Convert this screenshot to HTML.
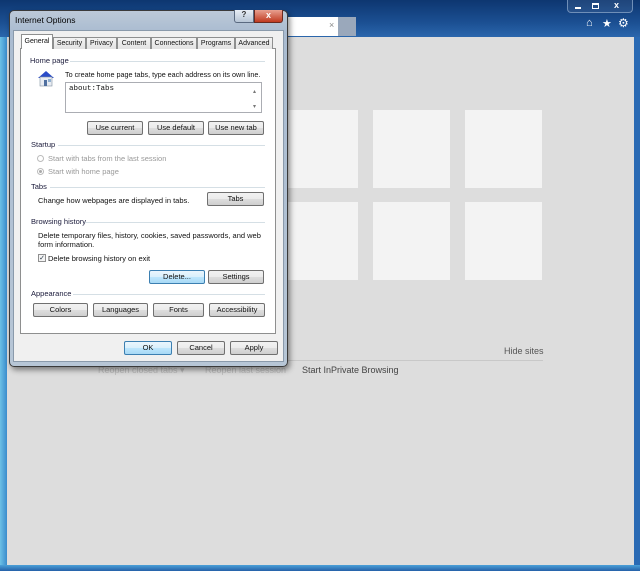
<!DOCTYPE html>
<html><head><meta charset="utf-8"><style>
*{margin:0;padding:0;box-sizing:border-box}
body{width:640px;height:571px;overflow:hidden;position:relative;font-family:"Liberation Sans",sans-serif;font-size:7.5px;color:#111;background:#2a5a9a}
.a{position:absolute}
.frame{left:0;top:0;width:640px;height:571px;background:linear-gradient(90deg,#6cc0e6 0,#3a8ccc 7px,#1e4f96 50%,#2a6ab4 100%)}
.top{left:0;top:0;width:640px;height:37px;background:linear-gradient(180deg,#0d3670 0,#1b4f92 60%,#2a66ac 100%)}
.content{left:7px;top:37px;width:627px;height:528px;background:#dddddd}
.btm{left:0;top:565px;width:640px;height:6px;background:linear-gradient(180deg,#4aa0d8,#2560a8)}
.tile{background:#f3f3f3;width:77px;height:78px}
.btn{position:absolute;height:14px;border:1px solid #707070;border-radius:2px;background:linear-gradient(#f2f2f2 0,#ebebeb 50%,#dddddd 51%,#cfcfcf 100%);text-align:center;line-height:12px;font-size:7.5px;color:#111}
.grp{position:absolute;font-size:7.5px;color:#1a1a3a}
.line{position:absolute;height:1px;background:#d5dfe5}
.tab{position:absolute;top:37px;height:12px;border:1px solid #8e8f8f;border-bottom:none;background:linear-gradient(#f3f3f3,#e3e3e3);font-size:7px;line-height:11px;text-align:center;white-space:nowrap;overflow:hidden}
</style></head><body>
<div class="a frame"></div>
<div class="a top"></div>
<div class="a content"></div>
<div class="a btm"></div>
<div class="a" style="left:567px;top:0;width:66px;height:13px;border:1px solid #6f8fb8;border-top:none;border-radius:0 0 4px 4px;background:rgba(255,255,255,.08)"></div>
<div class="a" style="left:575px;top:7px;width:6px;height:2px;background:#fff"></div>
<div class="a" style="left:592px;top:3px;width:7px;height:6px;border:1px solid #fff;border-top-width:2px"></div>
<div class="a" style="left:614px;top:0px;color:#fff;font-size:9px;font-weight:bold">x</div>
<div class="a" style="left:586px;top:17px;color:#fff;font-size:11px">&#8962;</div>
<div class="a" style="left:602px;top:17px;color:#fff;font-size:11px">&#9733;</div>
<div class="a" style="left:618px;top:16px;color:#fff;font-size:12px">&#9881;</div>
<div class="a" style="left:280px;top:17px;width:58px;height:19px;background:#fff"></div>
<div class="a" style="left:329px;top:20px;color:#888;font-size:9px">×</div>
<div class="a" style="left:338px;top:17px;width:18px;height:19px;background:#9aa8bb"></div>
<div class="a tile" style="left:281px;top:110px"></div>
<div class="a tile" style="left:373px;top:110px"></div>
<div class="a tile" style="left:465px;top:110px"></div>
<div class="a tile" style="left:281px;top:202px"></div>
<div class="a tile" style="left:373px;top:202px"></div>
<div class="a tile" style="left:465px;top:202px"></div>
<div class="a" style="left:504px;top:346px;font-size:9px;color:#555">Hide sites</div>
<div class="a" style="left:98px;top:360px;width:445px;height:1px;background:#c8c8c8"></div>
<div class="a" style="left:302px;top:365px;font-size:9px;color:#444">Start InPrivate Browsing</div>
<div class="a" style="left:98px;top:365px;font-size:9px;color:#bbb">Reopen closed tabs ▾</div>
<div class="a" style="left:205px;top:365px;font-size:9px;color:#bbb">Reopen last session</div>
<div class="a" style="left:9px;top:10px;width:279px;height:357px;border:1px solid #3a3a3a;border-radius:5px;background:linear-gradient(180deg,#bcc9d8 0,#a9bbd0 22px,#b7c6d6 100%);box-shadow:2px 3px 6px rgba(0,0,0,.45)"></div>
<div class="a" style="left:15px;top:15px;font-size:8.5px;color:#000">Internet Options</div>
<div class="a" style="left:234px;top:10px;width:20px;height:13px;border:1px solid #5a6a80;border-top:none;border-radius:0 0 0 3px;background:linear-gradient(#e8eef5,#b8c6d6);text-align:center;font-size:8px;font-weight:bold;color:#333">?</div>
<div class="a" style="left:254px;top:10px;width:29px;height:13px;border:1px solid #6a2a20;border-top:none;border-radius:0 0 3px 0;background:linear-gradient(#e8a090,#c03a20);text-align:center;font-size:9px;font-weight:bold;color:#fff;line-height:11px">x</div>
<div class="a" style="left:13px;top:30px;width:271px;height:332px;background:#f0f0f0;border:1px solid #8a9aab"></div>
<div class="a" style="left:20px;top:48px;width:256px;height:286px;background:#fff;border:1px solid #8e8f8f"></div>
<div class="tab" style="left:21px;top:34px;height:15px;width:32px;background:#fff;z-index:2;line-height:13px">General</div>
<div class="tab" style="left:53px;width:33px">Security</div>
<div class="tab" style="left:86px;width:31px">Privacy</div>
<div class="tab" style="left:117px;width:34px">Content</div>
<div class="tab" style="left:151px;width:46px">Connections</div>
<div class="tab" style="left:197px;width:38px">Programs</div>
<div class="tab" style="left:235px;width:38px">Advanced</div>
<div class="grp" style="left:30px;top:56px">Home page</div><div class="line" style="left:70px;top:61px;width:195px"></div>
<svg class="a" style="left:35px;top:68px" width="22" height="20" viewBox="0 0 22 20"><path d="M3 10 L11 3 L19 10 Z" fill="#2a4bc8"/><rect x="5" y="9" width="12" height="9" fill="#e8ecf2" stroke="#8090a0" stroke-width=".6"/><rect x="9" y="12" width="3" height="6" fill="#5070a0"/><rect x="13" y="11" width="3" height="3" fill="#90b0d0"/></svg>
<div class="a" style="left:65px;top:70px;font-size:7.2px;white-space:nowrap">To create home page tabs, type each address on its own line.</div>
<div class="a" style="left:65px;top:82px;width:197px;height:31px;border:1px solid #abadb3;background:#fff"></div>
<div class="a" style="left:69px;top:85px;font-family:'Liberation Mono',monospace;font-size:7.5px">about:Tabs</div>
<div class="a" style="left:253px;top:88px;font-size:6px;color:#777">▴</div>
<div class="a" style="left:253px;top:103px;font-size:6px;color:#777">▾</div>
<div class="btn" style="left:87px;top:121px;width:56px">Use current</div>
<div class="btn" style="left:148px;top:121px;width:56px">Use default</div>
<div class="btn" style="left:208px;top:121px;width:56px">Use new tab</div>
<div class="grp" style="left:31px;top:140px">Startup</div><div class="line" style="left:58px;top:145px;width:207px"></div>
<div class="a" style="left:37px;top:155px;width:7px;height:7px;border:1px solid #bbb;border-radius:50%"></div>
<div class="a" style="left:48px;top:154px;color:#999">Start with tabs from the last session</div>
<div class="a" style="left:37px;top:168px;width:7px;height:7px;border:1px solid #bbb;border-radius:50%"><div style="margin:1px;width:3px;height:3px;border-radius:50%;background:#aaa"></div></div>
<div class="a" style="left:48px;top:167px;color:#999">Start with home page</div>
<div class="grp" style="left:31px;top:182px">Tabs</div><div class="line" style="left:50px;top:187px;width:215px"></div>
<div class="a" style="left:38px;top:196px">Change how webpages are displayed in tabs.</div>
<div class="btn" style="left:207px;top:192px;width:57px">Tabs</div>
<div class="grp" style="left:31px;top:217px">Browsing history</div><div class="line" style="left:85px;top:222px;width:180px"></div>
<div class="a" style="left:38px;top:231px;width:225px;line-height:9px">Delete temporary files, history, cookies, saved passwords, and web form information.</div>
<div class="a" style="left:38px;top:254px;width:8px;height:8px;border:1px solid #8f8f8f;background:#f4f4f4;font-size:7px;line-height:7px;color:#234;text-align:center">✓</div>
<div class="a" style="left:48px;top:254px">Delete browsing history on exit</div>
<div class="btn" style="left:149px;top:270px;width:56px;border-color:#3c7fb1;background:linear-gradient(#eaf6fd,#d9f0fc 50%,#bee6fd 51%,#a7d9f5)">Delete...</div>
<div class="btn" style="left:208px;top:270px;width:56px">Settings</div>
<div class="grp" style="left:31px;top:289px">Appearance</div><div class="line" style="left:73px;top:294px;width:192px"></div>
<div class="btn" style="left:33px;top:303px;width:55px">Colors</div>
<div class="btn" style="left:93px;top:303px;width:55px">Languages</div>
<div class="btn" style="left:153px;top:303px;width:51px">Fonts</div>
<div class="btn" style="left:209px;top:303px;width:56px">Accessibility</div>
<div class="btn" style="left:124px;top:341px;width:48px;border-color:#3c7fb1;background:linear-gradient(#eaf6fd,#d9f0fc 50%,#bee6fd 51%,#a7d9f5)">OK</div>
<div class="btn" style="left:177px;top:341px;width:48px">Cancel</div>
<div class="btn" style="left:230px;top:341px;width:48px">Apply</div>
</body></html>
